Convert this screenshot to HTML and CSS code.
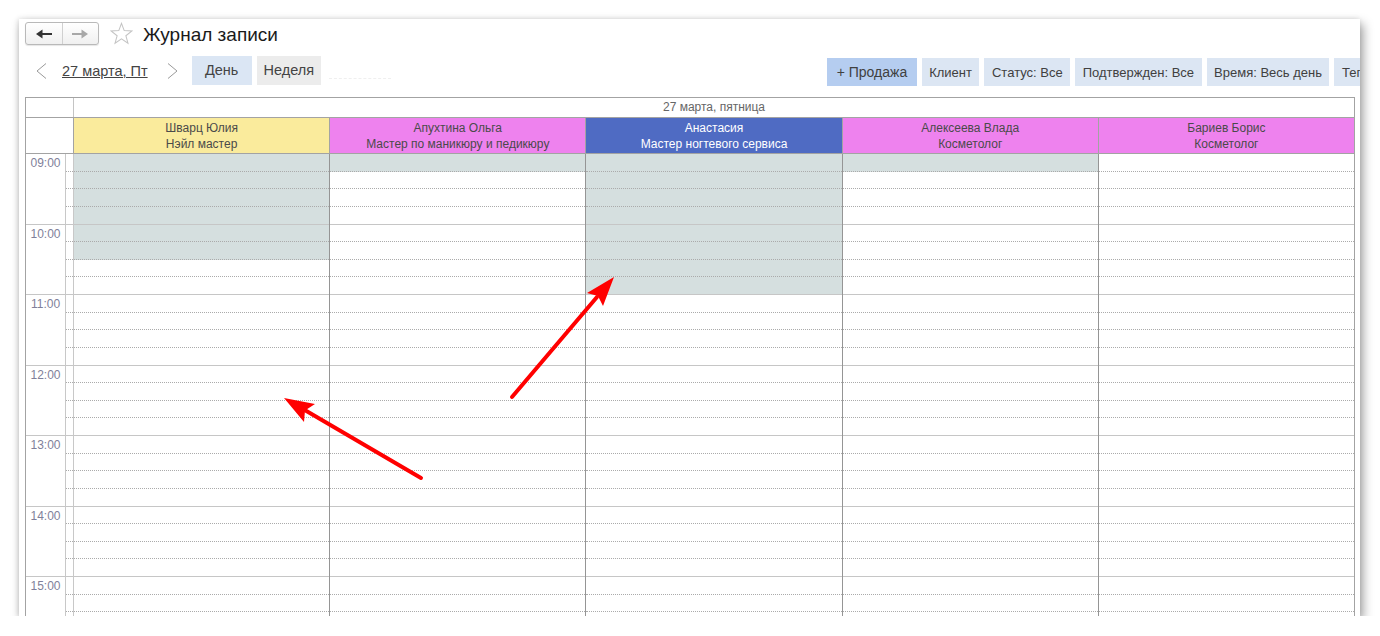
FILE: index.html
```html
<!DOCTYPE html>
<html lang="ru">
  <head>
    <meta charset="UTF-8" />
    <title>Журнал записи</title>
    <link rel="stylesheet" href="styles.css">
  </head>
  <body>
    <div class="window">
      <header class="titlebar">
        <div class="history">
          <button class="hist-btn">
            <svg width="16" height="10" viewBox="0 0 16 10"><polygon points="0,5 6.5,0.5 6.5,9.5" fill="#333"/><line x1="5" y1="5" x2="16" y2="5" stroke="#333" stroke-width="2"/></svg>
          </button>
          <button class="hist-btn">
            <svg width="16" height="10" viewBox="0 0 16 10"><polygon points="16,5 9.5,0.5 9.5,9.5" fill="#a8a8a8"/><line x1="0" y1="5" x2="11" y2="5" stroke="#a8a8a8" stroke-width="2"/></svg>
          </button>
        </div>
        <svg class="star" width="23" height="23" viewBox="0 0 22 22"><polygon points="11,1.3 13.59,8.24 20.99,8.56 15.18,13.16 17.17,20.29 11,16.2 4.83,20.29 6.82,13.16 1.01,8.56 8.41,8.24" fill="none" stroke="#c4c4c4" stroke-width="1"/></svg>
        <h1>Журнал записи</h1>
      </header>

      <div class="toolbar">
        <div class="period">
          <svg class="chevron" width="11" height="16" viewBox="0 0 11 16"><polyline points="10,0.5 1,8 10,15.5" fill="none" stroke="#999" stroke-width="1"/></svg>
          <a href="#" class="date-link">27 марта, Пт</a>
          <svg class="chevron next" width="11" height="16" viewBox="0 0 11 16"><polyline points="1,0.5 10,8 1,15.5" fill="none" stroke="#999" stroke-width="1"/></svg>
          <span class="tab active">День</span>
          <span class="tab">Неделя</span>
          <span class="faded"></span>
        </div>
        <div class="filters">
          <button class="filter primary">+ Продажа</button>
          <button class="filter">Клиент</button>
          <button class="filter">Статус: Все</button>
          <button class="filter">Подтвержден: Все</button>
          <button class="filter">Время: Весь день</button>
          <button class="filter">Теги: Все</button>
        </div>
      </div>

      <div class="schedule">
        <div class="head-date">
          <div class="corner"></div>
          <div class="date-cell">27 марта, пятница</div>
        </div>
        <div class="head-staff">
          <div class="corner"></div>
          <div class="staff yellow">Шварц Юлия<br>Нэйл мастер</div>
          <div class="staff pink">Апухтина Ольга<br>Мастер по маникюру и педикюру</div>
          <div class="staff blue">Анастасия<br>Мастер ногтевого сервиса</div>
          <div class="staff pink">Алексеева Влада<br>Косметолог</div>
          <div class="staff pink">Бариев Борис<br>Косметолог</div>
        </div>
        <div class="grid">
          <div class="hours">
            <div class="hour">09:00</div>
            <div class="hour">10:00</div>
            <div class="hour">11:00</div>
            <div class="hour">12:00</div>
            <div class="hour">13:00</div>
            <div class="hour">14:00</div>
            <div class="hour">15:00</div>
          </div>
          <div class="slots ticks"></div>
          <div class="slots master" data-busy="6"></div>
          <div class="slots master" data-busy="1"></div>
          <div class="slots master" data-busy="8"></div>
          <div class="slots master" data-busy="1"></div>
          <div class="slots master" data-busy="0"></div>
        </div>
      </div>
    </div>

    <!-- red pointer arrows on top of the page -->
    <svg class="marks" width="1380" height="636" viewBox="0 0 1380 636">
      <g fill="#ff0000" stroke="#ff0000" stroke-width="4" stroke-linecap="round">
        <line x1="421" y1="478" x2="303" y2="409"/>
        <polygon stroke="none" points="284,398 315,404 305,410.5 304,422"/>
        <line x1="512" y1="397" x2="597" y2="297"/>
        <polygon stroke="none" points="614,277 603,306 598,296 587,293"/>
      </g>
    </svg>

    <script>
      // 15-minute rows for each column, first N rows marked as booked
      document.querySelectorAll(".slots").forEach(function (col) {
        var busy = Number(col.dataset.busy || 0);
        for (var i = 0; i < 28; i++) {
          var slot = document.createElement("div");
          slot.className = "slot";
          if (i % 4 === 3) slot.className += " hour-end";
          if (i < busy) slot.className += " busy";
          col.appendChild(slot);
        }
      });
    </script>
  </body>
</html>
```

FILE: styles.css
```css
* {
  box-sizing: border-box;
}
body {
  margin: 0;
  background: #fff;
  font-family: "Liberation Sans", Arial, sans-serif;
  color: #333;
}
.window {
  margin: 19px 0 0 19px;
  width: 1341px;
  height: 597px;
  overflow: hidden;
  background: #fff;
  box-shadow: 3px 5px 10px rgba(0, 0, 0, 0.38), -1px 0 5px rgba(0, 0, 0, 0.12);
}

/* title line */
.titlebar {
  display: flex;
  align-items: center;
  height: 26px;
  padding: 3px 0 0 6px;
}
.history {
  display: flex;
  width: 74px;
  height: 23px;
  border: 1px solid #b9b9b9;
  border-radius: 3px;
  background: linear-gradient(#fff, #f0f0f0);
  box-shadow: 0 1px 1px rgba(0, 0, 0, 0.1);
}
.hist-btn {
  flex: 1;
  display: flex;
  align-items: center;
  justify-content: center;
  padding: 0;
  border: none;
  background: none;
}
.hist-btn + .hist-btn {
  border-left: 1px solid #d0d0d0;
}
.star {
  margin-left: 11px;
}
h1 {
  margin: 2px 0 0 10px;
  font-size: 19px;
  font-weight: normal;
  color: #1a1a1a;
}

/* period switch and filters */
.toolbar {
  display: flex;
  height: 30px;
  margin-top: 11px;
  padding-left: 17px;
}
.period {
  display: flex;
  align-items: center;
  height: 29px;
  flex-shrink: 0;
}
.date-link {
  margin: 0 19px 0 15px;
  font-size: 14.5px;
  color: #444;
}
.chevron.next {
  margin-right: 14px;
}
.tab {
  min-width: 60px;
  height: 29px;
  line-height: 29px;
  padding: 0 7px;
  margin-right: 5px;
  text-align: center;
  font-size: 14.5px;
  color: #444;
  background: #ececec;
}
.tab.active {
  background: #dbe6f4;
}
.faded {
  width: 62px;
  height: 1px;
  margin: 16px 0 0 3px;
  border-bottom: 1px dashed #efefef;
}
.filters {
  display: flex;
  gap: 5px;
  margin-left: 436px;
  align-self: flex-end;
  flex-shrink: 0;
}
.filter {
  height: 28px;
  padding: 0 7.5px;
  border: none;
  background: #dce6f3;
  font-family: inherit;
  font-size: 13px;
  color: #404040;
  white-space: nowrap;
}
.filter.primary {
  padding: 0 9.5px;
  font-size: 14px;
  background: #b5cdf0;
}

/* schedule table */
.schedule {
  width: 1330px;
  margin: 11px 0 0 6px;
  border: 1px solid #a3a3a3;
}
.head-date,
.head-staff {
  display: flex;
  border-bottom: 1px solid #a3a3a3;
}
.head-date {
  height: 20px;
}
.corner {
  width: 48px;
  flex-shrink: 0;
  border-right: 1px solid #c4c4c4;
}
.date-cell {
  flex: 1;
  text-align: center;
  font-size: 12px;
  line-height: 19px;
  color: #666;
}
.head-staff {
  height: 36px;
}
.head-staff .corner {
  border-right-color: #a3a3a3;
}
.staff {
  flex: 1;
  display: flex;
  flex-direction: column;
  justify-content: center;
  text-align: center;
  font-size: 12px;
  line-height: 16px;
  color: #4a4a4a;
  border-right: 1px solid #a3a3a3;
}
.staff:last-child {
  border-right: none;
}
.yellow {
  background: #faeb9c;
}
.pink {
  background: #ee82ee;
}
.blue {
  background: #4f6bc3;
  color: #fff;
}

.grid {
  display: flex;
}
.hours {
  width: 40px;
  flex-shrink: 0;
  border-right: 1px solid #c8c8c8;
}
.hour {
  height: 70.5px;
  padding-top: 2px;
  text-align: center;
  font-size: 12px;
  line-height: 14px;
  color: #7f7f9a;
  border-bottom: 1px solid #c6c6c6;
}
.slots {
  flex: 1;
  border-right: 1px solid #959595;
}
.slots:last-child {
  border-right: none;
}
.slots.ticks {
  flex: 0 0 8px;
  border-right-color: #c8c8c8;
}
.slot {
  height: 17.625px;
  border-bottom: 1px dotted #ababab;
}
.slot.hour-end {
  border-bottom: 1px solid #c6c6c6;
}
.slot.busy {
  background: #d5dfdf;
}

.marks {
  position: absolute;
  top: 0;
  left: 0;
  pointer-events: none;
}
```
